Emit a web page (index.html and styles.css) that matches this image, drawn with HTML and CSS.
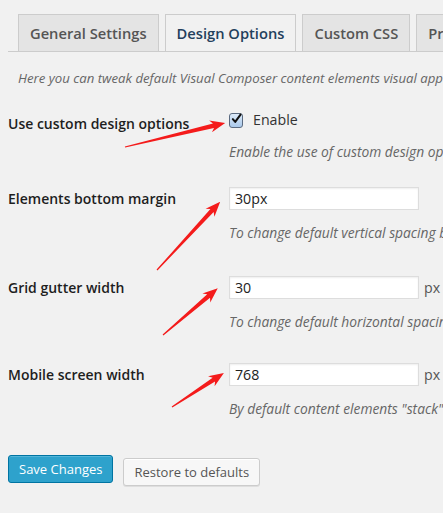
FILE: index.html
```html
<!DOCTYPE html>
<html>
<head>
<meta charset="utf-8">
<link rel="stylesheet" href="styles.css">
</head>
<body>
<div class="page">
  <nav class="tabs">
    <a class="tab">General Settings</a>
    <a class="tab tab-active">Design Options</a>
    <a class="tab">Custom CSS</a>
    <a class="tab">Product License</a>
  </nav>
  <p class="intro">Here you can tweak default Visual Composer content elements visual appearance. By default Visual Composer uses neutral light-grey theme.</p>

  <div class="form">
    <div class="row row-enable">
      <div class="label label-check">Use custom design options</div>
      <div class="field">
        <label class="check-line"><span class="checkbox"><svg width="12" height="12" viewBox="0 0 12 12"><path d="M2 6.2 L4.6 9.2 L10.4 1.2" fill="none" stroke="#111" stroke-width="2.2" stroke-linecap="round" stroke-linejoin="round"/></svg></span><span class="check-text">Enable</span></label>
        <p class="desc">Enable the use of custom design options for your Visual Composer content elements.</p>
      </div>
    </div>
    <div class="row row-margin">
      <div class="label">Elements bottom margin</div>
      <div class="field">
        <div class="input-line"><span class="input">30px</span></div>
        <p class="desc">To change default vertical spacing between content elements, enter new value here.</p>
      </div>
    </div>
    <div class="row row-gutter">
      <div class="label">Grid gutter width</div>
      <div class="field">
        <div class="input-line"><span class="input">30</span><span class="unit">px</span></div>
        <p class="desc">To change default horizontal spacing between rows and columns, enter new value here.</p>
      </div>
    </div>
    <div class="row row-mobile">
      <div class="label">Mobile screen width</div>
      <div class="field">
        <div class="input-line"><span class="input">768</span><span class="unit">px</span></div>
        <p class="desc">By default content elements "stack" one on top other when screen size is smaller than 768px.</p>
      </div>
    </div>
  </div>

  <div class="actions">
    <button class="btn btn-primary">Save Changes</button>
    <button class="btn btn-secondary">Restore to defaults</button>
  </div>

  <svg class="arrows" width="443" height="513" viewBox="0 0 443 513">
    <g fill="#f41b1b">
      <path transform="translate(125 147) rotate(-13.5)" d="M0,-0.6 L91,-2.2 L88,-6 L103,0 L88,6 L91,2.2 L0,0.6Z"/>
      <path transform="translate(157 270) rotate(-47.2)" d="M0,-0.6 L81,-2.2 L78,-6 L93,0 L78,6 L81,2.2 L0,0.6Z"/>
      <path transform="translate(163 335) rotate(-40.5)" d="M0,-0.6 L60,-2.2 L57,-6 L72,0 L57,6 L60,2.2 L0,0.6Z"/>
      <path transform="translate(172 407) rotate(-33.2)" d="M0,-0.6 L50,-2.2 L47,-6 L62,0 L47,6 L50,2.2 L0,0.6Z"/>
    </g>
  </svg>
</div>
</body>
</html>
```
FILE: styles.css
```css
html, body {
  margin: 0;
  padding: 0;
  background: #f1f1f1;
  overflow: hidden;
}
body {
  font-family: "Open Sans", "Liberation Sans", sans-serif;
  color: #333;
  width: 443px;
  height: 513px;
}
.page {
  position: relative;
  padding-left: 8px;
  height: 513px;
}
.tabs {
  display: flex;
  gap: 6px;
  padding-top: 14px;
  padding-left: 10px;
  border-bottom: 1px solid #ccc;
  white-space: nowrap;
  overflow: hidden;
}
.tab {
  flex: none;
  display: block;
  height: 36px;
  line-height: 36px;
  padding: 0 11px;
  font-size: 14.7px;
  font-weight: 600;
  color: #555;
  background: #e4e4e4;
  border: 1px solid #ccc;
  border-bottom: none;
}
.tab-active {
  background: #f1f1f1;
  color: #23405c;
  margin-bottom: -1px;
  border-bottom: 1px solid #f1f1f1;
}
.intro {
  margin: 17px 0 0;
  padding-left: 10px;
  font-style: italic;
  font-size: 13.2px;
  line-height: 18px;
  color: #666;
  white-space: nowrap;
}
.form {
  margin-top: 22px;
}
.row {
  display: flex;
}
.row-margin { margin-top: 26px; }
.row-gutter { margin-top: 34px; }
.row-mobile { margin-top: 32px; }
.label {
  flex: none;
  width: 221px;
  padding-top: 2px;
  font-size: 14px;
  font-weight: 600;
  line-height: 20px;
  color: #1e1e1e;
}
.label-check {
  padding-top: 5px;
}
.field {
  flex: none;
  min-width: 0;
  white-space: nowrap;
}
.check-line {
  display: flex;
  align-items: center;
  height: 20px;
}
.checkbox {
  box-sizing: border-box;
  width: 14px;
  height: 15px;
  margin-top: 3px;
  border: 1px solid #5a6a80;
  border-radius: 3px;
  background: linear-gradient(#dceaf8, #a9c8ea);
  display: flex;
  align-items: center;
  justify-content: center;
  overflow: visible;
}
.checkbox svg {
  margin-top: -3px;
  margin-left: 1px;
}
.check-text {
  margin-left: 10px;
  font-size: 14.2px;
  color: #333;
}
.desc {
  margin: 14px 0 0;
  font-style: italic;
  font-size: 13.8px;
  line-height: 18px;
  color: #666;
}
.input-line {
  display: flex;
  align-items: center;
}
.input {
  box-sizing: border-box;
  display: block;
  width: 190px;
  height: 23px;
  line-height: 21px;
  padding: 0 5px;
  font-size: 14.2px;
  color: #222;
  background: #fff;
  border: 1px solid #ddd;
  box-shadow: inset 0 1px 2px rgba(0,0,0,0.07);
}
.unit {
  margin-left: 5px;
  font-size: 14.2px;
  color: #555;
}
.actions {
  display: flex;
  align-items: flex-start;
  gap: 10px;
  margin-top: 37px;
}
.btn {
  font-family: "Open Sans", "Liberation Sans", sans-serif;
  font-size: 13px;
  height: 28px;
  line-height: 26px;
  padding: 0 10px;
  border-radius: 3px;
  margin: 0;
  white-space: nowrap;
  cursor: pointer;
}
.btn-primary {
  background: #2ea2cc;
  border: 1px solid #0074a2;
  color: #fff;
  box-shadow: inset 0 1px 0 rgba(120,200,230,0.5);
}
.btn-secondary {
  margin-top: 3px;
  background: #f7f7f7;
  border: 1px solid #ccc;
  color: #555;
  box-shadow: inset 0 1px 0 #fff, 0 1px 0 rgba(0,0,0,0.08);
}
.arrows {
  position: absolute;
  left: 0;
  top: 0;
  pointer-events: none;
}
```
